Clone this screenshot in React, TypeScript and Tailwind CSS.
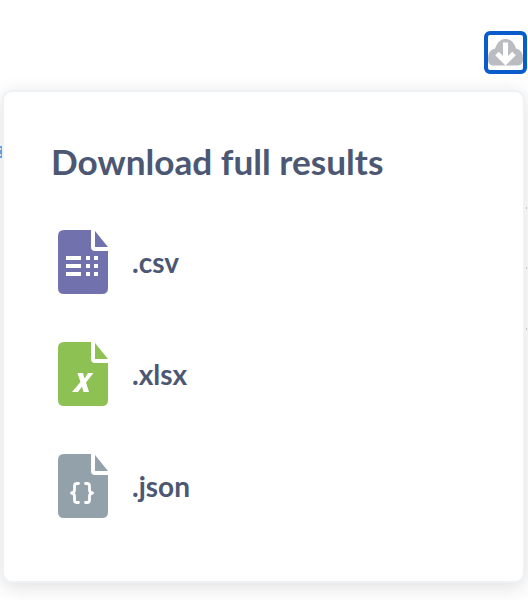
const LATO = "font-['Lato','Noto_Sans',sans-serif]";

const PAGE = "M6 0H33V17Q33 21 37 21H50V58Q50 64 44 64H6Q0 64 0 58V6Q0 0 6 0Z";
const FOLD = "M37 1L50 17H37Z";

function Csv() {
  return (
    <svg width="50" height="64" viewBox="0 0 50 64">
      <path d={PAGE} fill="#7172AD" />
      <path d={FOLD} fill="#7172AD" />
      <g fill="#fff">
        <rect x="8" y="26" width="15" height="4" />
        <rect x="8" y="34" width="15" height="4" />
        <rect x="8" y="42" width="15" height="4" />
        <rect x="28" y="26" width="4" height="4" />
        <rect x="36" y="26" width="4" height="4" />
        <rect x="28" y="34" width="4" height="4" />
        <rect x="36" y="34" width="4" height="4" />
        <rect x="28" y="42" width="4" height="4" />
        <rect x="36" y="42" width="4" height="4" />
      </g>
    </svg>
  );
}

function Xlsx() {
  return (
    <svg width="50" height="64" viewBox="0 0 50 64">
      <path d={PAGE} fill="#8DC153" />
      <path d={FOLD} fill="#8DC153" />
      <path d="M19.5 31H25L26.5 36.5L30 31H35.5L28 40.5L31 50H25.5L24 44.5L20 50H14L22.5 40Z" fill="#fff" />
    </svg>
  );
}

function Json() {
  return (
    <svg width="50" height="64" viewBox="0 0 50 64">
      <path d={PAGE} fill="#93A1AB" />
      <path d={FOLD} fill="#93A1AB" />
      <g fill="none" stroke="#fff" strokeWidth="2.8" strokeLinecap="round" strokeLinejoin="round">
        <path d="M20.5 29.5H19Q16.5 29.5 16.5 32V36Q16.5 38.5 13.5 39Q16.5 39.5 16.5 42V46Q16.5 48.5 19 48.5H20.5" />
        <path d="M27.5 29.5H29Q31.5 29.5 31.5 32V36Q31.5 38.5 34.5 39Q31.5 39.5 31.5 42V46Q31.5 48.5 29 48.5H27.5" />
      </g>
    </svg>
  );
}

function Row({ icon, label }: { icon: React.ReactNode; label: string }) {
  return (
    <div className="flex h-16 items-center gap-[24px]">
      {icon}
      <span className="text-[28px] leading-none font-bold text-[#4C5773]">{label}</span>
    </div>
  );
}

export default function App() {
  return (
    <div className={`relative h-[600px] w-[528px] overflow-hidden bg-white ${LATO}`}>
      <div className="flex h-[90px] items-start justify-end pr-[1px] pt-[31px]">
        <button className="flex h-[43px] w-[43px] items-center justify-center rounded-[6px] border-[4px] border-[#0A5BCB] bg-white">
          <svg width="35" height="27" viewBox="0 0 35 27" className="shrink-0">
            <path d="M5 26.5Q0 26 0 20Q0 11 7 9.5Q10 0 17.5 0Q25 0 28 9.5Q35 11 35 20Q35 26 30 26.5Z" fill="#BABCC2" />
            <path d="M17.5 3.5V21M9 14.5L17.5 23L26 14.5" fill="none" stroke="#fff" strokeWidth="5" />
          </svg>
        </button>
      </div>
      <svg width="4" height="12" viewBox="0 0 4 12" className="absolute left-0 top-[146px]">
        <path d="M0 0L3 3L0 6L3 9L0 12" fill="none" stroke="#5FA3EA" strokeWidth="2" />
      </svg>
      <div className="absolute right-[1px] top-[207px] h-[2px] w-[1px] bg-[#C9CDD2]" />
      <div className="absolute right-[1px] top-[267px] h-[2px] w-[1px] bg-[#C9CDD2]" />
      <div className="absolute right-[1px] top-[328px] h-[2px] w-[1px] bg-[#C9CDD2]" />
      <div className="relative ml-[2px] flex h-[493px] w-[523px] flex-col rounded-[10px] border-[2px] border-[#EFF2F5] bg-white pl-[47px] pt-[48.5px] shadow-[0_4px_20px_rgba(0,0,0,0.13)]">
        <h2 className="text-[35.2px] leading-[40px] font-bold text-[#4C5773]">Download full results</h2>
        <div className="mt-[49.5px] flex flex-col gap-[48px] pl-[7px]">
          <Row icon={<Csv />} label=".csv" />
          <Row icon={<Xlsx />} label=".xlsx" />
          <Row icon={<Json />} label=".json" />
        </div>
      </div>
    </div>
  );
}
